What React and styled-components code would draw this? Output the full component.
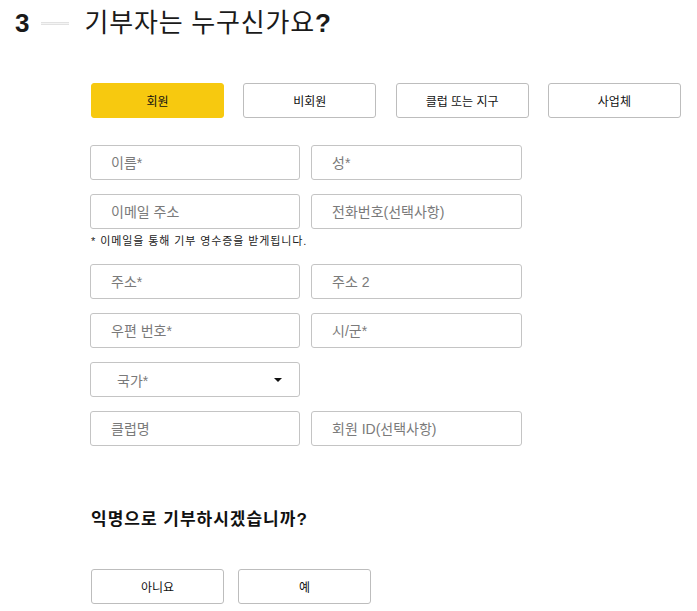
import React, { useState } from 'react'
import styled, { createGlobalStyle } from 'styled-components'

const GlobalStyle = createGlobalStyle`
  body {
    margin: 0;
    background: #fff;
    font-family: "Liberation Sans", "Noto Sans CJK KR", Arial, sans-serif;
    color: #1a1a1a;
  }
`

const Page = styled.div`
  width: 697px;
  height: 611px;
  overflow: hidden;
`

const Header = styled.div`
  display: flex;
  align-items: center;
  height: 26px;
  padding: 10px 0 0 15px;
`

const StepNumber = styled.span`
  font-size: 26px;
  font-weight: 700;
  line-height: 26px;
`

const StepLine = styled.span`
  display: block;
  width: 28px;
  height: 1px;
  margin: 1px 15px 0 12px;
  background: #f4f4f4;
  border: 1px solid #e2e2e2;
  border-left: none;
  border-right: none;
`

const Title = styled.h1`
  margin: 0;
  font-size: 26px;
  font-weight: 400;
  line-height: 26px;
  letter-spacing: 0.8px;

  & b {
    font-weight: 700;
  }
`

const Form = styled.div`
  padding: 47px 0 0 90px;
`

const TypeRow = styled.div`
  display: grid;
  grid-template-columns: repeat(4, 133px);
  column-gap: 19.3px;
  margin-left: 1px;
`

const ChoiceButton = styled.button`
  height: 35px;
  padding: 0;
  border-radius: 3px;
  border: 1px solid ${(p) => (p.$active ? '#f7c90f' : '#bdbdbd')};
  background: ${(p) => (p.$active ? '#f7c90f' : '#fff')};
  font-family: inherit;
  font-size: 12px;
  color: #111;
  cursor: pointer;
`

const Fields = styled.div`
  display: flex;
  flex-direction: column;
  gap: 14px;
  margin-top: 27px;
`

const Row = styled.div`
  display: grid;
  grid-template-columns: 210px 211px;
  column-gap: 11px;
`

const Group = styled.div`
  display: flex;
  flex-direction: column;
`

const Input = styled.input`
  box-sizing: border-box;
  height: 35px;
  width: 100%;
  padding: 0 20px;
  border: 1px solid #c4c4c4;
  border-radius: 3px;
  font-family: inherit;
  font-size: 14px;
  color: #333;
  outline: none;

  &::placeholder {
    color: #7a7a7a;
  }
`

const Note = styled.div`
  margin: 5px 0 2px 1px;
  font-size: 11px;
  line-height: 14px;
  letter-spacing: 0.9px;
  color: #222;
`

const SelectBox = styled.div`
  box-sizing: border-box;
  display: flex;
  align-items: center;
  justify-content: space-between;
  height: 35px;
  padding: 0 17px 0 26px;
  border: 1px solid #c4c4c4;
  border-radius: 3px;
  font-size: 14px;
  color: #7a7a7a;
`

const Caret = styled.span`
  width: 0;
  height: 0;
  border-left: 4px solid transparent;
  border-right: 4px solid transparent;
  border-top: 4px solid #111;
`

const Question = styled.h2`
  margin: 64px 0 0 1px;
  font-size: 17px;
  font-weight: 700;
  line-height: 19px;
  letter-spacing: 1px;
  color: #111;
`

const AnswerRow = styled.div`
  display: grid;
  grid-template-columns: repeat(2, 133px);
  column-gap: 14px;
  margin: 40px 0 0 1px;
`

const donorTypes = ['회원', '비회원', '클럽 또는 지구', '사업체']

const rows = [
  ['이름*', '성*'],
  ['이메일 주소', '전화번호(선택사항)'],
  ['주소*', '주소 2'],
  ['우편 번호*', '시/군*'],
]

const App = () => {
  const [type, setType] = useState('회원')

  return (
    <Page>
      <GlobalStyle />
      <Header>
        <StepNumber>3</StepNumber>
        <StepLine />
        <Title>
          기부자는 누구신가요<b>?</b>
        </Title>
      </Header>
      <Form>
        <TypeRow>
          {donorTypes.map((t) => (
            <ChoiceButton key={t} $active={t === type} onClick={() => setType(t)}>
              {t}
            </ChoiceButton>
          ))}
        </TypeRow>
        <Fields>
          {rows.map(([left, right], i) => (
            <Group key={left}>
              <Row>
                <Input placeholder={left} />
                <Input placeholder={right} />
              </Row>
              {i === 1 && <Note>* 이메일을 통해 기부 영수증을 받게됩니다.</Note>}
            </Group>
          ))}
          <Row>
            <SelectBox>
              국가*
              <Caret />
            </SelectBox>
          </Row>
          <Row>
            <Input placeholder="클럽명" />
            <Input placeholder="회원 ID(선택사항)" />
          </Row>
        </Fields>
        <Question>익명으로 기부하시겠습니까?</Question>
        <AnswerRow>
          <ChoiceButton>아니요</ChoiceButton>
          <ChoiceButton>예</ChoiceButton>
        </AnswerRow>
      </Form>
    </Page>
  )
}

export default App
